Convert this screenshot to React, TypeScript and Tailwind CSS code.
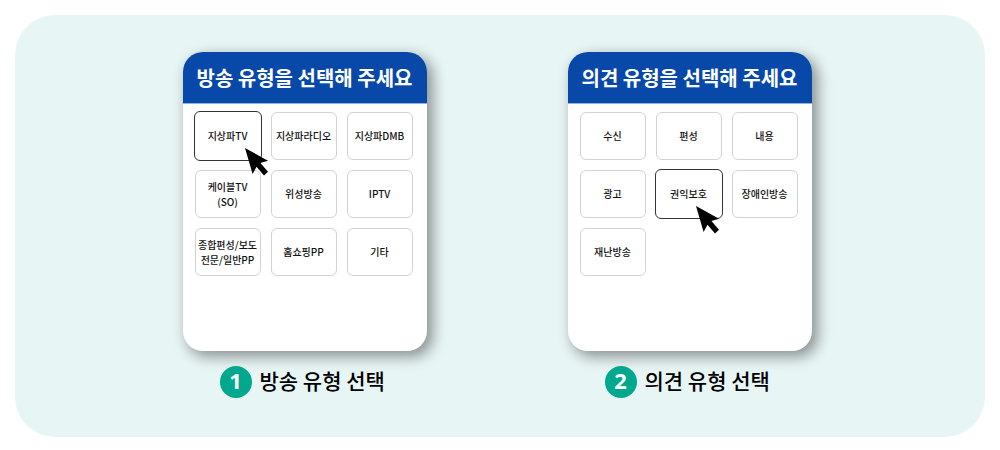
import React, { useState } from 'react';

interface Step {
  number: number;
  title: string;
  caption: string;
  options: string[];
  initial: string;
  pointerClass: string;
}

const STEPS: Step[] = [
  {
    number: 1,
    title: '방송 유형을 선택해 주세요',
    caption: '방송 유형 선택',
    options: [
      '지상파TV',
      '지상파라디오',
      '지상파DMB',
      '케이블TV\n(SO)',
      '위성방송',
      'IPTV',
      '종합편성/보도\n전문/일반PP',
      '홈쇼핑PP',
      '기타',
    ],
    initial: '지상파TV',
    pointerClass: 'left-3/4',
  },
  {
    number: 2,
    title: '의견 유형을 선택해 주세요',
    caption: '의견 유형 선택',
    options: ['수신', '편성', '내용', '광고', '권익보호', '장애인방송', '재난방송'],
    initial: '권익보호',
    pointerClass: 'left-3/5',
  },
];

// Mouse pointer shown over the selected option
const Pointer: React.FC<{ className: string }> = ({ className }) => (
  <svg
    className={`absolute top-9 ml-px h-7 w-6 pointer-events-none z-10 ${className}`}
    viewBox="0 0 24 28"
    fill="#000"
    aria-hidden="true"
  >
    <path d="M0 0L23 12.8L15.4 15L23 23.7L19 27.5L11.5 18.8L7.6 26Z" />
  </svg>
);

interface OptionButtonProps {
  label: string;
  selected: boolean;
  pointerClass: string;
  onSelect: () => void;
}

const OptionButton: React.FC<OptionButtonProps> = ({ label, selected, pointerClass, onSelect }) => (
  <button
    type="button"
    aria-pressed={selected}
    onClick={onSelect}
    className={`
      relative flex items-center justify-center rounded-md border bg-white pb-px text-[10px] leading-[15px] font-medium whitespace-pre text-[#111]
      ${selected ? '-m-px border-[#333]' : 'border-[#d2d2d2]'}
    `}
  >
    {label}
    {selected && <Pointer className={pointerClass} />}
  </button>
);

const StepCard: React.FC<{ step: Step }> = ({ step }) => {
  const [selected, setSelected] = useState(step.initial);

  return (
    <section>
      <div className="w-61 min-h-[299px] rounded-[20px] overflow-hidden bg-white shadow-[5px_5px_14px_1px_rgba(0,0,0,0.4)]">
        <h2 className="flex h-13 items-center justify-center border-b border-[#8fb0dc] bg-[#0748a8] text-xl font-bold text-white whitespace-nowrap">
          {step.title}
        </h2>
        <div className="grid grid-cols-3 auto-rows-[48px] gap-2.5 pt-2 pl-3 pr-3.5">
          {step.options.map((option) => (
            <OptionButton
              key={option}
              label={option}
              selected={option === selected}
              pointerClass={step.pointerClass}
              onSelect={() => setSelected(option)}
            />
          ))}
        </div>
      </div>
      <div className="mt-[15px] flex items-center gap-2 pl-[37px]">
        <span className="flex size-8 items-center justify-center rounded-full bg-[#00a88e] pb-1 font-['Noto_Sans',sans-serif] text-[22px] leading-none font-bold text-white">
          {step.number}
        </span>
        <p className="pb-1 text-[21px] leading-7 font-medium text-black whitespace-nowrap">{step.caption}</p>
      </div>
    </section>
  );
};

export default function App() {
  return (
    <main className="bg-white p-[15px] font-['Noto_Sans_CJK_KR',sans-serif]">
      <div className="flex flex-wrap items-start justify-center gap-x-[141px] gap-y-10 rounded-[40px] bg-[#e8f5f5] pt-[37px] pr-1.5 pb-[39px]">
        {STEPS.map((step) => (
          <StepCard key={step.number} step={step} />
        ))}
      </div>
    </main>
  );
}
